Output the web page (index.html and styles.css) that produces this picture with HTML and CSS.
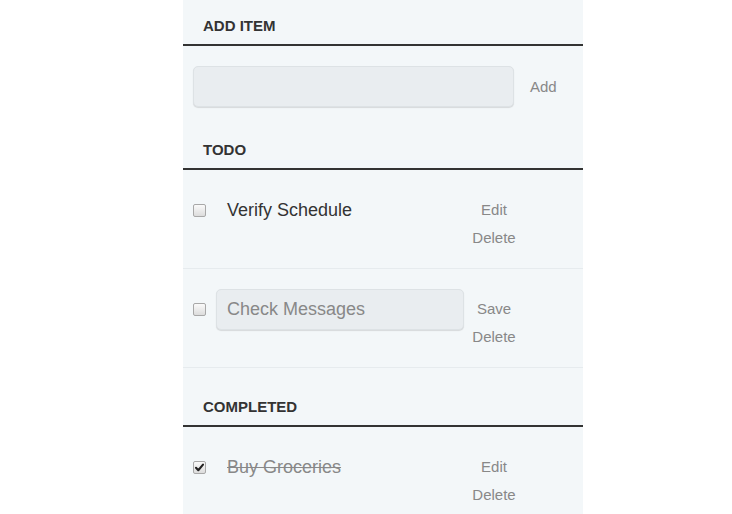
FILE: index.html
```html
<!DOCTYPE html>
<html lang="en">
<head>
<meta charset="utf-8">
<title>Todo</title>
<link rel="stylesheet" href="styles.css">
</head>
<body>
<div class="page">
  <div class="panel">
    <h3 class="heading heading-first">Add Item</h3>
    <div class="add-row">
      <input class="field field-new" type="text">
      <button class="action">Add</button>
    </div>

    <h3 class="heading">Todo</h3>
    <ul class="list">
      <li class="item">
        <span class="check"></span>
        <label class="item-label">Verify Schedule</label>
        <div class="actions">
          <button class="action">Edit</button>
          <button class="action">Delete</button>
        </div>
      </li>
      <li class="item">
        <span class="check"></span>
        <input class="field field-edit" type="text" value="Check Messages">
        <div class="actions">
          <button class="action">Save</button>
          <button class="action">Delete</button>
        </div>
      </li>
    </ul>

    <h3 class="heading">Completed</h3>
    <ul class="list">
      <li class="item item-done">
        <span class="check check-on"><svg width="11" height="11" viewBox="0 0 11 11"><path d="M2 5.8 L4.3 8.2 L9 2.6" fill="none" stroke="#222" stroke-width="2.1" stroke-linecap="round" stroke-linejoin="round"/></svg></span>
        <label class="item-label">Buy Groceries</label>
        <div class="actions">
          <button class="action">Edit</button>
          <button class="action">Delete</button>
        </div>
      </li>
    </ul>
  </div>
</div>
</body>
</html>
```

FILE: styles.css
```css
* { box-sizing: border-box; }
html, body { margin: 0; padding: 0; background: #fff; }
body {
  font-family: "Liberation Sans", Arial, sans-serif;
  color: #333;
  height: 514px;
  overflow: hidden;
}
.page {
  padding-left: 183px;
  height: 100%;
}
.panel {
  width: 400px;
  min-height: 100%;
  background: #f3f7f9;
}
.heading {
  margin: 0;
  padding: 30px 20px 10px;
  font-size: 15px;
  line-height: 17px;
  font-weight: 700;
  text-transform: uppercase;
  color: #333;
  border-bottom: 2px solid #333;
}
.heading-first { padding-top: 17px; }

.add-row {
  display: flex;
  align-items: center;
  padding: 20px 10px 4px;
}
.field {
  margin: 0;
  height: 41px;
  padding: 0 10px;
  font-family: "Liberation Sans", Arial, sans-serif;
  font-size: 18px;
  color: #888;
  background: #e9edf0;
  border: 1px solid #dde2e5;
  border-radius: 5px;
  box-shadow: 0 1px 1px rgba(0, 0, 0, 0.12);
  outline: none;
}
.field-new { width: 324px; }
.field-edit { width: 248px; }

.action {
  width: 60px;
  padding: 0;
  margin: 0;
  border: 0;
  background: none;
  font-family: "Liberation Sans", Arial, sans-serif;
  font-size: 15px;
  line-height: 20px;
  color: #888;
  text-align: center;
}

.list { margin: 0; padding: 0; list-style: none; }
.item {
  display: flex;
  align-items: flex-start;
  padding: 20px 0;
  border-bottom: 1px solid #e6ebee;
}
.list:last-child .item:last-child { border-bottom: 0; }
.check {
  flex: none;
  width: 13px;
  height: 13px;
  margin: 14px 10px 0;
  border: 1px solid #a8a8a8;
  border-radius: 2px;
  background: linear-gradient(#fafafa, #dcdcdc);
  display: flex;
  align-items: center;
  justify-content: center;
}
.check svg { display: block; }
.item-label {
  width: 248px;
  padding-left: 11px;
  font-size: 18px;
  line-height: 40px;
  color: #333;
}
.item-done .item-label {
  color: #888;
  text-decoration: line-through;
}
.actions {
  display: flex;
  flex-direction: column;
  gap: 8px;
  padding-top: 10px;
}
```
